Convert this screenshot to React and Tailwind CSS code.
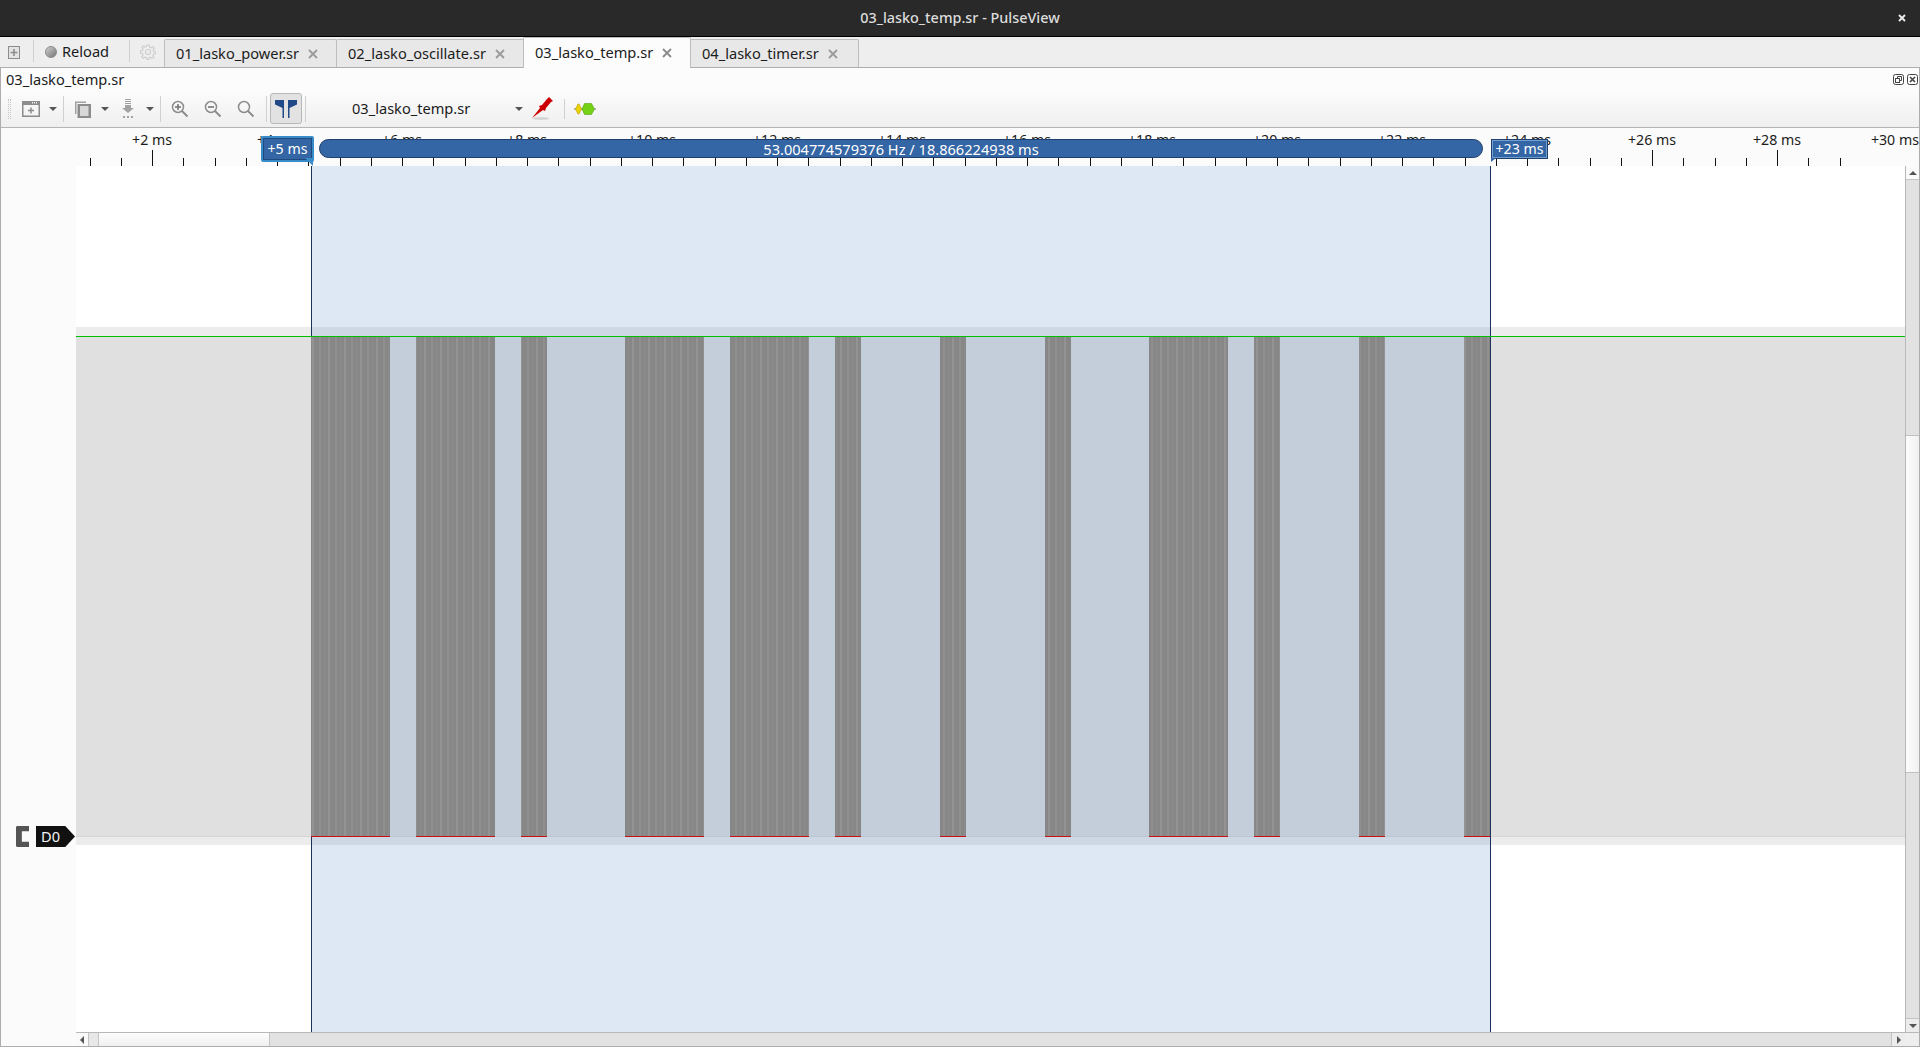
const TABS = [
  { name: '01_lasko_power.sr', w: 'w-[173px]' },
  { name: '02_lasko_oscillate.sr', w: 'w-[188px]' },
  { name: '03_lasko_temp.sr', w: 'w-[168px]', active: true },
  { name: '04_lasko_timer.sr', w: 'w-[169px]' },
];

// ruler geometry: 62.5px per ms, zero at x=27
const TICKS = Array.from({ length: 57 }, (_, i) => i + 2).map(k => ({
  x: Math.round(27 + k * 31.25),
  major: k % 4 === 0,
}));
const LABELS = [2, 4, 6, 8, 10, 12, 14, 16, 18, 20, 22, 24, 26, 28].map(ms => ({ ms, x: 27 + ms * 62.5 }));

// pulse bursts, in units of 26.2px from the first cursor
const BURSTS = [[0, 3], [4, 7], [8, 9], [12, 15], [16, 19], [20, 21], [24, 25], [28, 29], [32, 35], [36, 37], [40, 41], [44, 45]];

function Caret() {
  return <div className="w-0 h-0 border-x-[4px] border-x-transparent border-t-[4px] border-t-[#555555]" />;
}

function Sep({ className = '' }) {
  return <div className={`w-px bg-[#d0d0d0] ${className}`} />;
}

function TabClose({ active }) {
  return (
    <svg width="10" height="10" viewBox="0 0 10 10" className="ml-[9px] mb-[1px]">
      <path d="M1 1L9 9M9 1L1 9" stroke={active ? '#8a8a8a' : '#9a9a9a'} strokeWidth="1.8" />
    </svg>
  );
}

function ZoomIcon({ mark }) {
  return (
    <svg width="18" height="18" viewBox="0 0 18 18" fill="none" stroke="#8c8c8c">
      <circle cx="7" cy="7" r="5.5" strokeWidth="1.5" />
      <path d="M11 11L16.5 16.5" strokeWidth="2" />
      {mark !== 'none' && <path d="M4 7H10" strokeWidth="1.6" stroke="#777777" />}
      {mark === 'plus' && <path d="M7 4V10" strokeWidth="1.6" stroke="#777777" />}
    </svg>
  );
}

function Toolbar() {
  return (
    <div className="h-[38px] shrink-0 flex items-center bg-gradient-to-b from-[#fcfcfc] to-[#efefef] border-b border-[#b4b4b4] text-[#1c1c1c]">
      <div className="w-[3px] h-[20px] ml-[7px] border-x border-dotted border-[#c4c4c4]" />
      <svg width="18" height="16" viewBox="0 0 18 16" className="ml-[11px]">
        <path fillRule="evenodd" d="M0 0H18V16H0ZM1.5 4V14.5H16.5V4ZM10 1H11V2.5H10ZM12 1H13V2.5H12ZM14 1H15V2.5H14Z" fill="#8c8c8c" />
        <path d="M9 6.5V12.5M6 9.5H12" stroke="#8c8c8c" strokeWidth="1.5" />
      </svg>
      <div className="ml-[9px]"><Caret /></div>
      <Sep className="h-[26px] ml-[6px]" />
      <svg width="16" height="18" viewBox="0 0 16 18" className="ml-[11px]">
        <path d="M0 1.5H11V3H1.5V14H0Z" fill="#a0a0a0" />
        <path fillRule="evenodd" d="M2.5 4H16V18H2.5Z" fill="#8c8c8c" />
        <rect x="5" y="6" width="8.5" height="10" fill="#d8d8d8" />
      </svg>
      <div className="ml-[10px]"><Caret /></div>
      <svg width="12" height="20" viewBox="0 0 12 20" className="ml-[13px]">
        <path d="M3 0H9V1H3ZM3 2H9V3H3ZM3 4H9V5H3ZM3 6H9V9H12L6 14L0 9H3Z" fill="#a2a2a2" />
        <path d="M1 17H3V19H1ZM5 17H7V19H5ZM9 17H11V19H9Z" fill="#a2a2a2" />
      </svg>
      <div className="ml-[12px]"><Caret /></div>
      <Sep className="h-[26px] ml-[6px]" />
      <div className="ml-[10px]"><ZoomIcon mark="plus" /></div>
      <div className="ml-[15px]"><ZoomIcon mark="minus" /></div>
      <div className="ml-[15px]"><ZoomIcon mark="none" /></div>
      <Sep className="h-[26px] ml-[11px]" />
      <div className="w-[32px] h-[31px] ml-[3px] flex items-center justify-center bg-[#e2e2e2] border border-[#b8b8b8] rounded-[3px]">
        <svg width="22" height="18" viewBox="0 0 22 18" shapeRendering="geometricPrecision">
          <path d="M0 0H9V18H7.5V8L0 4.5ZM22 0H13V18H14.5V8L22 4.5Z" fill="#204a87" />
        </svg>
      </div>
      <Sep className="h-[26px] ml-[3px]" />
      <span className="ml-[46px] w-[163px] pt-[1px] whitespace-nowrap">03_lasko_temp.sr</span>
      <Caret />
      <svg width="22" height="24" viewBox="0 0 22 24" className="ml-[9px] mt-[1px]">
        <ellipse cx="9" cy="21.5" rx="8.5" ry="1.5" fill="#d4d4d4" />
        <path d="M0 21L8 11L7 9L10 8L15 2L17 0L21 4L19 5L14 11L13 14L11 13Z" fill="#cc0000" />
      </svg>
      <Sep className="h-[20px] ml-[10px]" />
      <svg width="22" height="12" viewBox="0 0 22 12" className="ml-[9px]">
        <path d="M0 6H22" stroke="#777777" strokeWidth="1" />
        <path d="M1.5 6L4 1H5L7.5 6L5 11H4Z" fill="#edd400" stroke="#b59a00" strokeWidth="0.6" />
        <path d="M8 6L10.5 0.5H17.5L20.5 6L17.5 11.5H10.5Z" fill="#73d216" stroke="#5a9e12" strokeWidth="0.6" />
      </svg>
    </div>
  );
}

function Ruler() {
  return (
    <div className="relative h-[38px] shrink-0 bg-[#fbfbfb] overflow-hidden text-[14.2px]">
      {LABELS.map(l => (
        <span key={l.ms} style={{ left: l.x - 1 }} className="absolute top-[1px] -translate-x-1/2 whitespace-nowrap text-[#1c1c1c]">+{l.ms} ms</span>
      ))}
      <span className="absolute top-[1px] right-0 whitespace-nowrap text-[#1c1c1c]">+30 ms</span>
      <svg width="1917" height="38" className="absolute left-[-1px] top-0" shapeRendering="crispEdges">
        {TICKS.map(t => (
          <line key={t.x} x1={t.x + 0.5} x2={t.x + 0.5} y1={t.major ? 22 : 30} y2="38" stroke="#111111" />
        ))}
      </svg>
      {/* first cursor flag, highlighted */}
      <div className="absolute left-[260px] top-[8px] w-[53px] h-[26px] flex items-center justify-center bg-[#3465a4] border-[2px] border-[#3a8cc8] rounded-[2px] outline outline-1 -outline-offset-3 outline-[#1f4a80] text-white">+5 ms</div>
      <div className="absolute left-[304px] top-[30px] w-[8px] h-[8px] bg-[#3a8cc8] [clip-path:polygon(0_0,100%_0,100%_100%)]" />
      {/* measure pill */}
      <div className="absolute left-[318px] top-[11px] w-[1164px] h-[19px] flex items-center justify-center pt-[1px] rounded-full bg-[#3465a4] border border-[#1f3f6e] text-white text-[14.6px] leading-none">
        53.004774579376 Hz / 18.866224938 ms
      </div>
      {/* second cursor flag */}
      <div className="absolute left-[1490px] top-[11px] w-[57px] h-[20px] flex items-center justify-center bg-[#3465a4] border border-[#1f3f6e] outline outline-1 -outline-offset-2 outline-[#729fcf] text-white">+23 ms</div>
      <div className="absolute left-[1490px] top-[30px] w-[5px] h-[4px] bg-[#3465a4] [clip-path:polygon(0_0,100%_0,0_100%)]" />
    </div>
  );
}

function Wave() {
  return (
    <svg width="1829" height="500" className="absolute left-0 top-[10px]" shapeRendering="crispEdges">
      <defs>
        <pattern id="pulses" width="16" height="10" patternUnits="userSpaceOnUse">
          <rect width="16" height="10" fill="#878787" />
          <rect x="3" width="2" height="10" fill="#8f8f8f" />
          <rect x="8" width="1" height="10" fill="#8c8c8c" />
          <rect x="12" width="2" height="10" fill="#939393" />
        </pattern>
      </defs>
      {BURSTS.map(([a, b]) => {
        const x = Math.round(235 + a * 26.2);
        const w = Math.round((b - a) * 26.2);
        return (
          <g key={a}>
            <rect x={x} y="0" width={w} height="499" fill="url(#pulses)" />
            <rect x={x} y="499" width={w} height="1" fill="#c81010" />
          </g>
        );
      })}
    </svg>
  );
}

function VScroll() {
  return (
    <div className="w-[14px] flex flex-col bg-[#e2e2e2] border-l border-[#b8b8b8]">
      <div className="h-[14px] flex items-center justify-center bg-[#fafafa] border-b border-[#c4c4c4]">
        <div className="w-0 h-0 border-x-[4px] border-x-transparent border-b-[4px] border-b-[#555555]" />
      </div>
      <div className="h-[255px]" />
      <div className="h-[338px] bg-gradient-to-r from-[#fdfdfd] to-[#f0f0f0] border-y border-[#c0c0c0]" />
      <div className="flex-1" />
      <div className="h-[14px] flex items-center justify-center bg-[#ececec] border-t border-[#c4c4c4]">
        <div className="w-0 h-0 border-x-[4px] border-x-transparent border-t-[4px] border-t-[#555555]" />
      </div>
    </div>
  );
}

function HScroll() {
  return (
    <div className="h-[14px] shrink-0 flex bg-[#fbfbfb]">
      <div className="w-[75px]" />
      <div className="flex-1 flex bg-[#e2e2e2] border-t border-[#b8b8b8]">
        <div className="w-[13px] flex items-center justify-center bg-[#fafafa] border-r border-[#c4c4c4]">
          <div className="w-0 h-0 border-y-[4px] border-y-transparent border-r-[4px] border-r-[#555555]" />
        </div>
        <div className="w-[9px] bg-[#e8e8e8]" />
        <div className="w-[172px] bg-gradient-to-b from-[#fdfdfd] to-[#f0f0f0] border-x border-[#c4c4c4]" />
        <div className="flex-1" />
        <div className="w-[14px] flex items-center justify-center bg-[#ececec] border-l border-[#c4c4c4]">
          <div className="w-0 h-0 border-y-[4px] border-y-transparent border-l-[4px] border-l-[#555555]" />
        </div>
      </div>
      <div className="w-[14px] bg-[#eeeeee] border-t border-[#b8b8b8]" />
    </div>
  );
}

export default function App() {
  return (
    <div className="h-screen flex flex-col overflow-hidden bg-white font-['Noto_Sans',sans-serif] text-[14.6px]">
      {/* window title */}
      <div className="relative h-[37px] shrink-0 flex items-center justify-center pb-[1px] bg-[#292929] border-b border-black text-[#dcdcdc] text-[14.4px] font-medium">
        03_lasko_temp.sr - PulseView
        <svg width="8" height="8" viewBox="0 0 8 8" className="absolute right-[14px] top-[14px]">
          <path d="M1 1L7 7M7 1L1 7" stroke="#f0f0f0" strokeWidth="1.8" />
        </svg>
      </div>

      {/* session tabs */}
      <div className="h-[30px] shrink-0 flex bg-[#eeeeee] text-[#1c1c1c]">
        <div className="w-[33px] flex items-center justify-center pr-[5px]">
          <svg width="12" height="13" viewBox="0 0 12 13">
            <rect x="0.5" y="0.5" width="11" height="12" fill="#e4e4e4" stroke="#8c8c8c" />
            <path d="M6 3V10M2.5 6.5H9.5" stroke="#8c8c8c" strokeWidth="1.6" />
          </svg>
        </div>
        <Sep className="h-[22px] mt-[3px] bg-[#c4c4c4]" />
        <div className="w-[95px] flex items-center pl-[11px] gap-[5px]">
          <div className="w-[12px] h-[12px] rounded-full bg-gradient-to-br from-[#cfcfcf] to-[#777777] border border-[#8a8a8a]" />
          <span>Reload</span>
        </div>
        <Sep className="h-[22px] mt-[3px] bg-[#c4c4c4]" />
        <div className="w-[34px] flex items-center justify-center pl-[2px] pb-[1px]">
          <svg width="16" height="16" viewBox="0 0 16 16" fill="none" stroke="#cfcfcf" strokeWidth="1.2">
            <circle cx="8" cy="8" r="2.5" />
            <path d="M6.8 1H9.2L9.6 3L11.2 3.7L13 2.6L14.4 4.4L13.1 5.9L13.7 7.4L15.5 8V9.6L13.6 10.1L12.9 11.6L13.8 13.4L12 14.6L10.6 13.3L9.2 13.8L8.8 15.4H7L6.6 13.7L5 13.1L3.3 14.2L1.8 12.6L3 11L2.4 9.6L0.6 9.2V7L2.4 6.5L3 5L2 3.3L3.6 2L5.2 3L6.5 2.6Z" />
          </svg>
        </div>
        {TABS.map(t => (
          <div
            key={t.name}
            className={`${t.w} flex items-center pl-[11px] border-x border-t border-[#bdbdbd] rounded-t-[2px] -mr-px ${
              t.active ? 'relative h-[31px] bg-[#fcfcfc] border-b-0' : 'h-[28px] mt-[2px] pt-[1px] bg-[#e8e8e8]'
            }`}
          >
            <span className="whitespace-nowrap">{t.name}</span>
            <TabClose active={t.active} />
          </div>
        ))}
      </div>

      {/* dock */}
      <div className="flex-1 min-h-0 flex flex-col mb-px bg-[#fcfcfc] border border-[#adadad] text-[#1c1c1c]">
        <div className="h-[22px] shrink-0 flex items-center justify-between pl-[5px] pr-[1px]">
          <span className="pt-[1px]">03_lasko_temp.sr</span>
          <div className="flex gap-[3px]">
            <svg width="11" height="11" viewBox="0 0 11 11" fill="none" stroke="#444444">
              <rect x="0.5" y="0.5" width="10" height="10" rx="2" />
              <rect x="2.5" y="4.5" width="4" height="4" />
              <path d="M4.5 4.5V2.5H8.5V6.5H6.5" />
            </svg>
            <svg width="11" height="11" viewBox="0 0 11 11" fill="none" stroke="#444444">
              <rect x="0.5" y="0.5" width="10" height="10" rx="2" />
              <path d="M3 3L8 8M8 3L3 8" strokeWidth="1.6" />
            </svg>
          </div>
        </div>
        <Toolbar />
        <Ruler />

        <div className="flex-1 min-h-0 flex">
          {/* trace header */}
          <div className="w-[75px] shrink-0 flex items-start gap-[7px] pl-[15px] pt-[660px] bg-[#fbfbfb]">
            <div className="w-[13px] h-[21px] border-[3px] border-r-0 border-[#555555] rounded-l-[2px] [clip-path:polygon(0_0,100%_0,100%_25%,45%_25%,45%_75%,100%_75%,100%_100%,0_100%)] bg-[#555555]" />
            <div className="w-[39px] h-[21px] flex items-center pl-[5px] bg-[#111111] text-[#f4f4f4] [clip-path:polygon(0_0,75%_0,100%_50%,75%_100%,0_100%)]">D0</div>
          </div>

          {/* trace viewport */}
          <div className="relative flex-1 flex flex-col bg-white">
            <div className="h-[161px]" />
            <div className="relative h-[518px] flex flex-col bg-[#ececec]">
              <div className="h-[9px]" />
              <div className="h-px bg-[#00c000]" />
              <div className="h-[500px] bg-[#e0e0e0] border-b border-[#d6d6d6]" />
            </div>
            {/* cursor span */}
            <div className="absolute left-[235px] top-0 bottom-0 w-[1180px] bg-[#2a6ebb]/16 border-x border-[#1b3358]" />
            <div className="absolute left-0 right-0 top-[161px]">
              <Wave />
              <div className="absolute left-0 right-0 top-[9px] h-px bg-[#00c000]" />
            </div>
          </div>
          <VScroll />
        </div>
        <HScroll />
      </div>
    </div>
  );
}
